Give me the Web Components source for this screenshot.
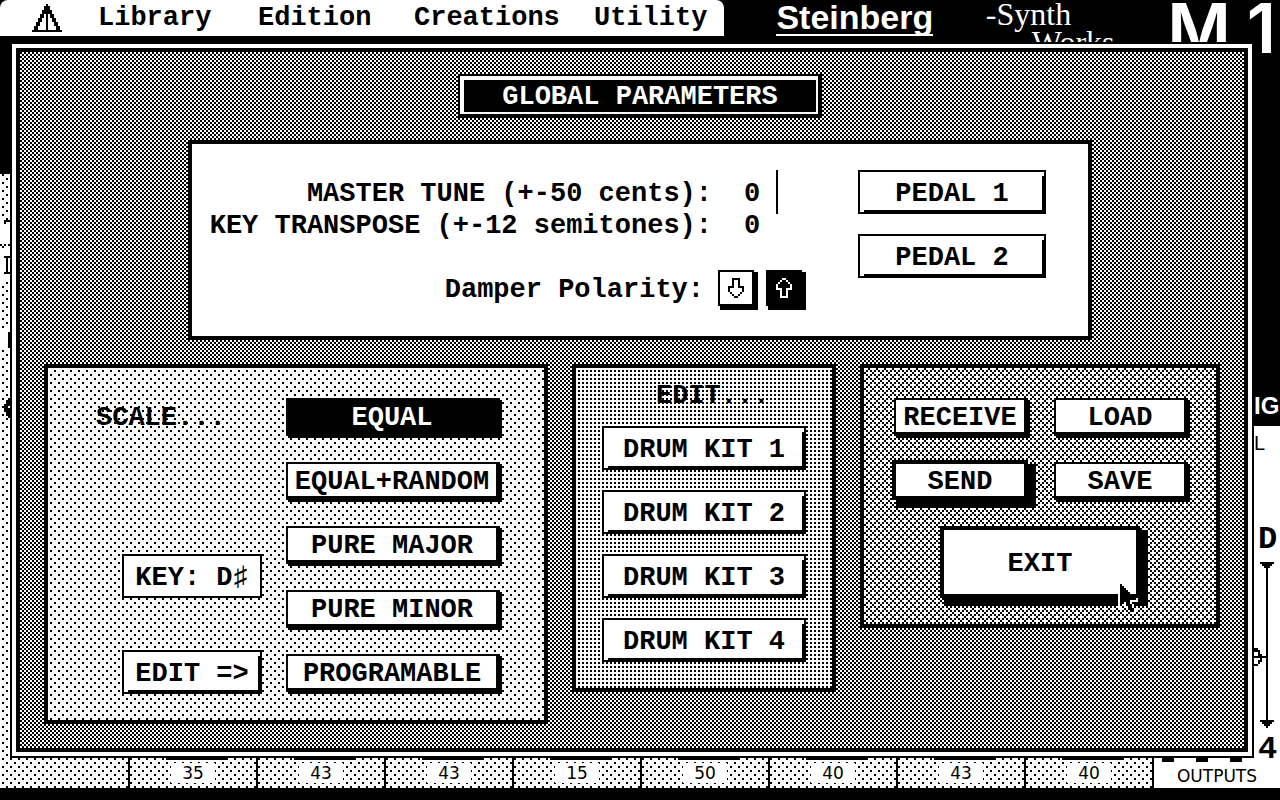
<!DOCTYPE html>
<html lang="en">
<head>
<meta charset="utf-8">
<title>M1 Synth Works - Global Parameters</title>
<style>
  :root {
    --ui-font: "Liberation Mono", "DejaVu Sans Mono", monospace;
    --label-font: "DejaVu Sans", sans-serif;
    --dot: conic-gradient(from 270deg at 2px 2px, #000 90deg, transparent 0);

    /* dither fills, all aligned to the screen like GEM patterns */
    --fill-light:
      var(--dot) 6px 2px / 8px 8px fixed,
      var(--dot) 2px 6px / 8px 8px fixed,
      #fff;
    --fill-grid: var(--dot) 2px 2px / 4px 4px fixed, #fff;
    --fill-medium:
      var(--dot) 2px 2px / 4px 4px fixed,
      var(--dot) 4px 0 / 8px 8px fixed,
      var(--dot) 0 4px / 8px 8px fixed,
      #fff;
    --fill-half:
      var(--dot) 2px 2px / 4px 4px fixed,
      var(--dot) 0 0 / 4px 4px fixed,
      #fff;
  }

  body {
    margin: 0;
    background: #000;
    color: #000;
    font: bold 27px/32px var(--ui-font);
  }
</style>
</head>
<body>
<m1-editor></m1-editor>

<script>
const BITMAPS = {
  logo: [
    ".......#.......",
    "......###......",
    "......###......",
    ".....#####.....",
    ".....#####.....",
    "....##.#.##....",
    "....##.#.##....",
    "...##..#..##...",
    "...##..#..##...",
    "..##...#...##..",
    "..##...#...##..",
    ".##....#....##.",
    ".##....#....##.",
    "###############",
  ],
  down: [
    "..####..",
    "..#..#..",
    "..#..#..",
    "..#..#..",
    "###..###",
    "#......#",
    "#......#",
    ".#....#.",
    "..#..#..",
    "...##...",
  ],
  up: [
    "...##...",
    "..#..#..",
    ".#....#.",
    "#......#",
    "#......#",
    "###..###",
    "..#..#..",
    "..#..#..",
    "..#..#..",
    "..####..",
  ],
  pointer: [
    ".#........",
    ".##.......",
    ".###......",
    ".####.....",
    "o#####....",
    "o######...",
    "o#######..",
    "o########o",
    "o#####oooo",
    "o##o##o...",
    "o#oo###o..",
    "oo..o##o..",
    "....o###o.",
    ".....o##o.",
  ],
};

// Draws a one-bit picture, each cell is 2px on screen.
class PixelIcon extends HTMLElement {
  constructor() {
    super();
    this.attachShadow({ mode: "open" });
  }

  trace(rows, mark) {
    let d = "";
    rows.forEach((row, y) => {
      [...row].forEach((cell, x) => {
        if (cell === mark) d += `M${x} ${y}h1v1h-1z`;
      });
    });
    return d;
  }

  connectedCallback() {
    const rows = BITMAPS[this.getAttribute("name")];
    const w = rows[0].length;
    const h = rows.length;
    this.shadowRoot.innerHTML = `
      <style>
        :host { display: block; }
        svg { display: block; }
      </style>
      <svg width="${w * 2}" height="${h * 2}" viewBox="0 0 ${w} ${h}" shape-rendering="crispEdges" aria-hidden="true">
        <path fill="#fff" d="${this.trace(rows, "o")}"/>
        <path fill="currentColor" d="${this.trace(rows, "#")}"/>
      </svg>
    `;
  }
}

class PushButton extends HTMLElement {
  constructor() {
    super();
    this.attachShadow({ mode: "open" });
    this.shadowRoot.innerHTML = `
      <style>
        :host { display: block; }
        button {
          display: flex;
          align-items: center;
          justify-content: center;
          box-sizing: border-box;
          width: 100%;
          min-height: 36px;
          margin: 0;
          padding: 4px 0 0;
          border: 2px solid #000;
          border-radius: 0;
          background: #fff;
          color: #000;
          font: inherit;
          line-height: 28px;
          white-space: nowrap;
          box-shadow: 3px 3px 0 1px #000;
        }
        :host([icon]) button { padding: 0; }
        :host([selected]) button { background: #000; color: #fff; }
        :host([look="flat"]) button { min-height: 44px; box-shadow: none; }
        :host([look="ridge"]) button {
          min-height: 44px;
          box-shadow: none;
          background:
            linear-gradient(#000 0 0) right bottom / 2px calc(100% - 4px) no-repeat,
            linear-gradient(#000 0 0) right bottom / calc(100% - 4px) 2px no-repeat,
            #fff;
        }
        :host([look="default"]) button {
          min-height: 40px;
          border-width: 4px;
          box-shadow: 6px 6px 0 2px #000;
        }
        :host([size="large"]) button { min-height: 72px; }
      </style>
      <button type="button"><slot></slot></button>
    `;
  }

  connectedCallback() {
    const button = this.shadowRoot.querySelector("button");
    if (this.hasAttribute("selected")) button.setAttribute("aria-pressed", "true");
    if (this.hasAttribute("icon")) button.setAttribute("aria-label", this.getAttribute("icon"));
  }
}

class ParamField extends HTMLElement {
  constructor() {
    super();
    this.attachShadow({ mode: "open" });
  }

  connectedCallback() {
    const label = this.getAttribute("label");
    const value = this.getAttribute("value");
    this.shadowRoot.innerHTML = `
      <style>
        :host { display: flex; align-items: center; height: 32px; }
        label { flex: 0 0 520px; margin-right: 32px; text-align: right; white-space: nowrap; }
        input {
          width: 32px;
          height: 32px;
          padding: 0;
          border: 0;
          outline: 0;
          background: none;
          color: inherit;
          font: inherit;
        }
        .caret { display: none; width: 2px; height: 44px; margin: -8px 0 -4px; background: #000; }
        :host([active]) .caret { display: block; }
      </style>
      <label for="field">${label}</label>
      <input id="field" type="text" value="${value}">
      <span class="caret"></span>
    `;
  }
}

class DitherPanel extends HTMLElement {
  constructor() {
    super();
    this.attachShadow({ mode: "open" });
    this.shadowRoot.innerHTML = `
      <style>
        :host {
          display: block;
          box-sizing: border-box;
          border: 4px solid #000;
          background: #fff;
        }
        :host([fill="light"]) { background: var(--fill-light); }
        :host([fill="grid"]) { background: var(--fill-grid); }
        :host([fill="medium"]) { background: var(--fill-medium); }
      </style>
      <slot></slot>
    `;
  }
}

class MenuBar extends HTMLElement {
  constructor() {
    super();
    this.attachShadow({ mode: "open" });
    this.shadowRoot.innerHTML = `
      <style>
        :host { display: flex; height: 36px; background: #000; color: #fff; }
        nav {
          display: grid;
          grid-template-columns: 66px 160px 156px 180px auto;
          align-items: center;
          box-sizing: border-box;
          padding: 0 17px 0 32px;
          border-radius: 8px 8px 0 0;
          background: #fff;
          color: #000;
        }
        nav button {
          justify-self: start;
          padding: 0;
          border: 0;
          background: none;
          color: inherit;
          font: inherit;
          line-height: 32px;
        }
        .brands {
          flex: 1;
          display: flex;
          justify-content: space-between;
          align-items: flex-start;
          padding: 0 4px 0 52px;
        }
        .maker {
          border-bottom: 2px solid #fff;
          font: bold 34px/34px "Liberation Sans", sans-serif;
        }
        /* the dialog hides everything lower than 42px */
        .product {
          height: 42px;
          overflow: hidden;
          font: 32px/28px "Liberation Serif", serif;
          white-space: nowrap;
        }
        .product span { display: block; padding-left: 46px; }
        .model { display: flex; gap: 16px; font: 600 69px/56px Inter, sans-serif; }
        .model .cut { height: 42px; overflow: hidden; }
      </style>
      <nav>
        <pixel-icon name="logo"></pixel-icon>
        <button type="button">Library</button>
        <button type="button">Edition</button>
        <button type="button">Creations</button>
        <button type="button">Utility</button>
      </nav>
      <div class="brands">
        <div class="maker">Steinberg</div>
        <div class="product">-Synth<span>Works</span></div>
        <div class="model"><span class="cut">M</span><span>1</span></div>
      </div>
    `;
  }
}

class TrackStrip extends HTMLElement {
  constructor() {
    super();
    this.attachShadow({ mode: "open" });
  }

  connectedCallback() {
    const cells = this.getAttribute("values").split(" ")
      .map((v) => `<div class="cell"><output>${v}</output></div>`)
      .join("");
    this.shadowRoot.innerHTML = `
      <style>
        :host {
          display: grid;
          grid-template-columns: repeat(10, 1fr);
          height: 30px;
          background: var(--fill-light);
          font: 17px/20px var(--label-font);
        }
        .cell, .outputs { border-left: 2px solid #000; }
        .cell {
          display: flex;
          flex-direction: column;
          align-items: center;
        }
        .cell::before { content: ""; width: 62px; height: 2px; margin-left: 8px; background: #000; }
        output { width: 44px; margin-top: 3px; background: #fff; text-align: center; }
        .outputs { display: flex; flex-direction: column; background: #fff; text-align: center; }
        .ports { display: flex; gap: 22px; padding-left: 8px; }
        .ports i { width: 12px; height: 4px; background: #000; }
        .outputs span { margin-top: 4px; }
      </style>
      <div></div>
      ${cells}
      <div class="outputs">
        <div class="ports"><i></i><i></i><i></i></div>
        <span>OUTPUTS</span>
      </div>
    `;
  }
}

// The parts of the editor page that stay visible beside the dialog.
class PageEdges extends HTMLElement {
  constructor() {
    super();
    this.attachShadow({ mode: "open" });
    this.shadowRoot.innerHTML = `
      <style>
        :host { display: flex; justify-content: space-between; }
        .left, .right { display: flex; flex-direction: column; }
        .left { width: 10px; background: var(--fill-light); }
        .left .dark { height: 138px; background: #000; }
        .right { width: 26px; background: #fff; }
        .right .dark {
          display: flex;
          align-items: flex-end;
          height: 390px;
          background: #000;
          color: #fff;
          font: bold 24px/40px "Liberation Sans", sans-serif;
        }
        .small { height: 96px; font: 20px/34px "Liberation Sans", sans-serif; }
        .mark { height: 34px; padding-left: 4px; font-size: 32px; line-height: 36px; }
        .mark.last { height: 30px; line-height: 44px; }
        svg { display: block; }
      </style>
      <div class="left">
        <div class="dark"></div>
        <svg width="10" height="260" shape-rendering="crispEdges" aria-hidden="true">
          <path fill="#fff" d="M0 46h10v24H0zM0 76h10v30H0zM0 156h8v20H0z"/>
          <path d="M4 46h6v2H6v2H4zM0 70h2v2H0zM4 70h2v2H4zM8 70h2v2H8zM4 82h6v2H8v14h2v2H4v-2h2V84H4zM8 158h2v16H8z"/>
          <path d="M8 224h2v20H8v-2H6v-4H4v-8h2v-4h2z"/>
          <path fill="#fff" d="M8 232h2v2H8z"/>
        </svg>
      </div>
      <div class="right">
        <div class="dark">IG</div>
        <div class="small">L</div>
        <div class="mark">D</div>
        <svg width="26" height="172" viewBox="0 0 26 172" shape-rendering="crispEdges" aria-hidden="true">
          <path d="M6 6h14v2h-2v2h-2v2h-2v152h6v2h-2v2h-2v2h-2v2h-2v-2h-2v-2h-2v-2H6v-2h6V12h-2v-2H8V8H6z"/>
          <path d="M0 92h4v2h2v4h2v2h4v2H8v4H6v2H4v2H0v-2h4v-4h2v-2H0v-2h4v-4H0z"/>
        </svg>
        <div class="mark last">4</div>
      </div>
    `;
  }
}

class GlobalDialog extends HTMLElement {
  constructor() {
    super();
    this.attachShadow({ mode: "open" });
    this.shadowRoot.innerHTML = `
      <style>
        :host {
          display: block;
          box-sizing: border-box;
          border: 2px solid #000;
          background: #fff;
          padding: 4px;
        }
        .body {
          display: flex;
          flex-direction: column;
          gap: 24px;
          box-sizing: border-box;
          height: 100%;
          padding-top: 22px;
          border: 4px solid #000;
          background: var(--fill-half);
        }
        .top {
          display: flex;
          flex-direction: column;
          align-items: center;
          gap: 22px;
          padding-left: 16px;
        }
        .title { padding: 2px 4px 4px 2px; background: #000; }
        h1 {
          margin: 0;
          padding: 2px 38px 0;
          border: solid #fff;
          border-width: 4px 2px 2px 4px;
          background: #000;
          color: #fff;
          font: inherit;
          line-height: 30px;
        }
        .params {
          display: flex;
          justify-content: space-between;
          width: 904px;
          min-height: 200px;
          padding: 26px 42px 0 0;
        }
        form { padding-top: 8px; }
        .damper { display: flex; align-items: center; gap: 12px; height: 36px; margin-top: 28px; }
        .damper span { flex: 0 0 512px; margin-right: 2px; padding-top: 4px; text-align: right; }
        .damper push-button { width: 36px; }
        .pedals { display: flex; flex-direction: column; gap: 20px; width: 188px; }
        .columns {
          display: grid;
          grid-template-columns: 21fr 11fr 15fr;
          align-items: start;
          gap: 24px;
          padding: 0 24px;
        }
        h2 { margin: 0; font: inherit; }
        .scale {
          display: grid;
          grid-template-columns: 140px 212px;
          justify-content: end;
          column-gap: 24px;
          padding: 30px 46px 26px 48px;
        }
        .side { display: flex; flex-direction: column; height: 296px; }
        .side h2 { margin: 4px 0 auto -26px; }
        .side push-button + push-button { margin-top: 52px; }
        .list { display: flex; flex-direction: column; gap: 28px; }
        .kits { display: flex; flex-direction: column; gap: 20px; padding: 12px 26px 26px; }
        .kits h2 { margin: 0 0 -6px 54px; }
        .actions {
          display: grid;
          grid-template-columns: 132px 132px;
          justify-content: space-between;
          align-items: center;
          gap: 28px;
          padding: 30px 30px 26px;
        }
        .actions [look="default"] { margin: -2px; }
        .actions [size="large"] { grid-column: 1 / -1; justify-self: center; width: 200px; margin: 0; }
      </style>
      <div class="body">
        <div class="top">
          <div class="title"><h1>GLOBAL PARAMETERS</h1></div>
          <dither-panel class="params">
            <form>
              <param-field label="MASTER TUNE (+-50 cents):" value="0" active></param-field>
              <param-field label="KEY TRANSPOSE (+-12 semitones):" value="0"></param-field>
              <div class="damper">
                <span>Damper Polarity:</span>
                <push-button icon="Down"><pixel-icon name="down"></pixel-icon></push-button>
                <push-button icon="Up" selected><pixel-icon name="up"></pixel-icon></push-button>
              </div>
            </form>
            <div class="pedals">
              <push-button look="ridge">PEDAL 1</push-button>
              <push-button look="ridge">PEDAL 2</push-button>
            </div>
          </dither-panel>
        </div>
        <div class="columns">
          <dither-panel class="scale" fill="light">
            <div class="side">
              <h2>SCALE...</h2>
              <push-button look="flat">KEY: D♯</push-button>
              <push-button look="ridge">EDIT =&gt;</push-button>
            </div>
            <div class="list">
              <push-button selected>EQUAL</push-button>
              <push-button>EQUAL+RANDOM</push-button>
              <push-button>PURE MAJOR</push-button>
              <push-button>PURE MINOR</push-button>
              <push-button>PROGRAMABLE</push-button>
            </div>
          </dither-panel>
          <dither-panel class="kits" fill="grid">
            <h2>EDIT...</h2>
            <push-button look="ridge">DRUM KIT 1</push-button>
            <push-button look="ridge">DRUM KIT 2</push-button>
            <push-button look="ridge">DRUM KIT 3</push-button>
            <push-button look="ridge">DRUM KIT 4</push-button>
          </dither-panel>
          <dither-panel class="actions" fill="medium">
            <push-button>RECEIVE</push-button>
            <push-button>LOAD</push-button>
            <push-button look="default">SEND</push-button>
            <push-button>SAVE</push-button>
            <push-button look="default" size="large">EXIT</push-button>
          </dither-panel>
        </div>
      </div>
    `;
  }
}

class M1Editor extends HTMLElement {
  constructor() {
    super();
    this.attachShadow({ mode: "open" });
    this.shadowRoot.innerHTML = `
      <style>
        :host {
          display: flex;
          flex-direction: column;
          box-sizing: border-box;
          min-height: 100vh;
          padding-bottom: 12px;
        }
        menu-bar { position: relative; z-index: 2; }
        main { position: relative; z-index: 1; flex: 1; display: grid; }
        global-dialog { position: absolute; inset: 6px 26px 0 10px; }
        .pointer { position: absolute; z-index: 3; left: 1118px; top: 584px; }
      </style>
      <menu-bar></menu-bar>
      <main>
        <page-edges></page-edges>
        <global-dialog></global-dialog>
      </main>
      <track-strip values="35 43 43 15 50 40 43 40"></track-strip>
      <pixel-icon class="pointer" name="pointer"></pixel-icon>
    `;
  }
}

customElements.define("pixel-icon", PixelIcon);
customElements.define("push-button", PushButton);
customElements.define("param-field", ParamField);
customElements.define("dither-panel", DitherPanel);
customElements.define("menu-bar", MenuBar);
customElements.define("track-strip", TrackStrip);
customElements.define("page-edges", PageEdges);
customElements.define("global-dialog", GlobalDialog);
customElements.define("m1-editor", M1Editor);
</script>
</body>
</html>
